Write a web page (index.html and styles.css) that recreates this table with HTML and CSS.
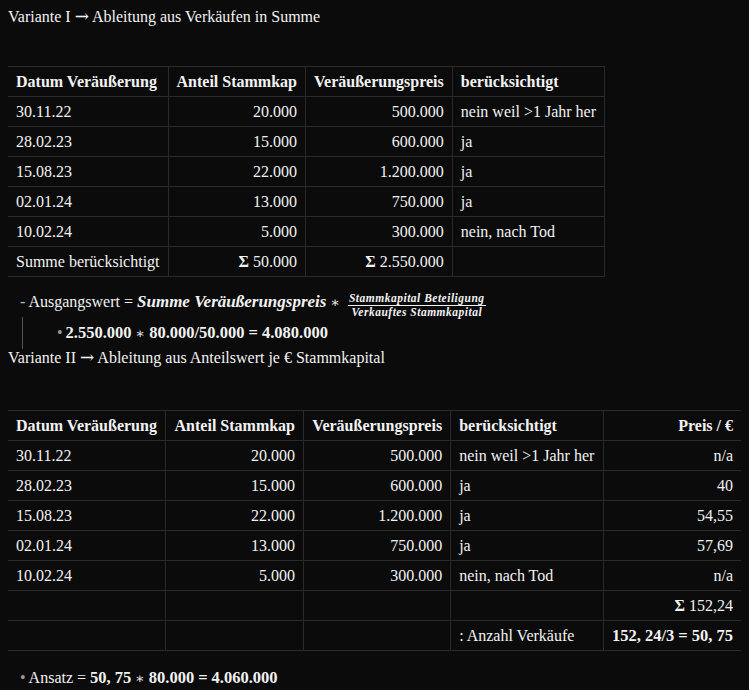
FILE: index.html
```html
<!DOCTYPE html>
<html lang="de">
<head>
<meta charset="utf-8">
<link rel="stylesheet" href="styles.css">
</head>
<body>
<p class="heading">Variante I <span class="arrow">→</span> Ableitung aus Verkäufen in Summe</p>

<table class="tbl tbl1">
  <thead>
    <tr><th>Datum Veräußerung</th><th class="r">Anteil Stammkap</th><th class="r">Veräußerungspreis</th><th>berücksichtigt</th></tr>
  </thead>
  <tbody>
    <tr><td>30.11.22</td><td class="r">20.000</td><td class="r">500.000</td><td>nein weil &gt;1 Jahr her</td></tr>
    <tr><td>28.02.23</td><td class="r">15.000</td><td class="r">600.000</td><td>ja</td></tr>
    <tr><td>15.08.23</td><td class="r">22.000</td><td class="r">1.200.000</td><td>ja</td></tr>
    <tr><td>02.01.24</td><td class="r">13.000</td><td class="r">750.000</td><td>ja</td></tr>
    <tr><td>10.02.24</td><td class="r">5.000</td><td class="r">300.000</td><td>nein, nach Tod</td></tr>
    <tr><td>Summe berücksichtigt</td><td class="r"><b>Σ</b> 50.000</td><td class="r"><b>Σ</b> 2.550.000</td><td></td></tr>
  </tbody>
</table>

<div class="formula"><span class="dash">-</span> Ausgangswert = <span class="mbi">Summe Veräußerungspreis</span><span class="op">∗</span><span class="frac"><span class="num">Stammkapital Beteiligung</span><span class="den">Verkauftes Stammkapital</span></span></div>
<div class="sub">
  <span class="bullet">•</span><span class="mb">2.550.000<span class="op">∗</span>80.000/50.000<span class="eq">=</span>4.080.000</span>
</div>

<p class="heading">Variante II <span class="arrow">→</span> Ableitung aus Anteilswert je € Stammkapital</p>

<table class="tbl tbl2">
  <thead>
    <tr><th>Datum Veräußerung</th><th class="r">Anteil Stammkap</th><th class="r">Veräußerungspreis</th><th>berücksichtigt</th><th class="r">Preis / €</th></tr>
  </thead>
  <tbody>
    <tr><td>30.11.22</td><td class="r">20.000</td><td class="r">500.000</td><td>nein weil &gt;1 Jahr her</td><td class="r">n/a</td></tr>
    <tr><td>28.02.23</td><td class="r">15.000</td><td class="r">600.000</td><td>ja</td><td class="r">40</td></tr>
    <tr><td>15.08.23</td><td class="r">22.000</td><td class="r">1.200.000</td><td>ja</td><td class="r">54,55</td></tr>
    <tr><td>02.01.24</td><td class="r">13.000</td><td class="r">750.000</td><td>ja</td><td class="r">57,69</td></tr>
    <tr><td>10.02.24</td><td class="r">5.000</td><td class="r">300.000</td><td>nein, nach Tod</td><td class="r">n/a</td></tr>
    <tr><td></td><td></td><td></td><td></td><td class="r"><b>Σ</b> 152,24</td></tr>
    <tr><td></td><td></td><td></td><td>: Anzahl Verkäufe</td><td class="r"><span class="mb">152, 24/3<span class="eq">=</span>50, 75</span></td></tr>
  </tbody>
</table>

<div class="ansatz">
  <span class="bullet">•</span>Ansatz = <span class="mb">50, 75<span class="op">∗</span>80.000<span class="eq">=</span>4.060.000</span>
</div>
</body>
</html>
```

FILE: styles.css
```css
html, body {
  background: #0b0b0b;
}
body {
  margin: 8px;
  color: #f2f2f2;
  font-family: "Liberation Serif", "Times New Roman", serif;
  font-size: 16px;
  line-height: 18px;
}
.heading {
  margin: 0;
  height: 18px;
}
.arrow {
  font-family: "DejaVu Serif", serif;
  font-size: 17px;
  line-height: 10px;
}
.tbl {
  border-collapse: collapse;
  margin-top: 40px;
  margin-left: -1px;
}
.tbl2 {
  margin-top: 43px;
  width: 735px;
}
.tbl th, .tbl td {
  border: 1px solid #2a2a2a;
  padding: 6px 8px 5px 8px;
  line-height: 18px;
  text-align: left;
  white-space: nowrap;
  font-weight: normal;
}
.tbl th {
  font-weight: bold;
}
.tbl .r {
  text-align: right;
}
.tbl b {
  font-weight: bold;
}
.formula {
  margin-top: 10px;
  padding-left: 12px;
  height: 30px;
  line-height: 30px;
  white-space: nowrap;
}
.dash {
  color: #bbbbbb;
}
.mbi {
  font-weight: bold;
  font-style: italic;
  font-size: 17px;
}
.op {
  font-family: "DejaVu Serif", serif;
  font-weight: normal;
  font-size: 14px;
  margin: 0 4px;
}
.eq {
  margin: 0 4px;
}
.frac {
  display: inline-flex;
  flex-direction: column;
  align-items: center;
  vertical-align: middle;
  font-weight: bold;
  font-style: italic;
  font-size: 11.5px;
  line-height: 13px;
  letter-spacing: 0.5px;
  margin-left: 4px;
  position: relative;
  top: 2px;
}
.num {
  border-bottom: 1px solid #f2f2f2;
  padding: 0 1px;
}
.sub {
  margin-left: 14px;
  border-left: 1px solid #555555;
  padding-left: 34px;
  height: 32px;
  line-height: 32px;
  white-space: nowrap;
}
.bullet {
  color: #9a9a9a;
  margin-right: 3px;
}
.mb {
  font-weight: bold;
  font-size: 16.5px;
}
.ansatz {
  margin-top: 18px;
  padding-left: 12px;
}
```
